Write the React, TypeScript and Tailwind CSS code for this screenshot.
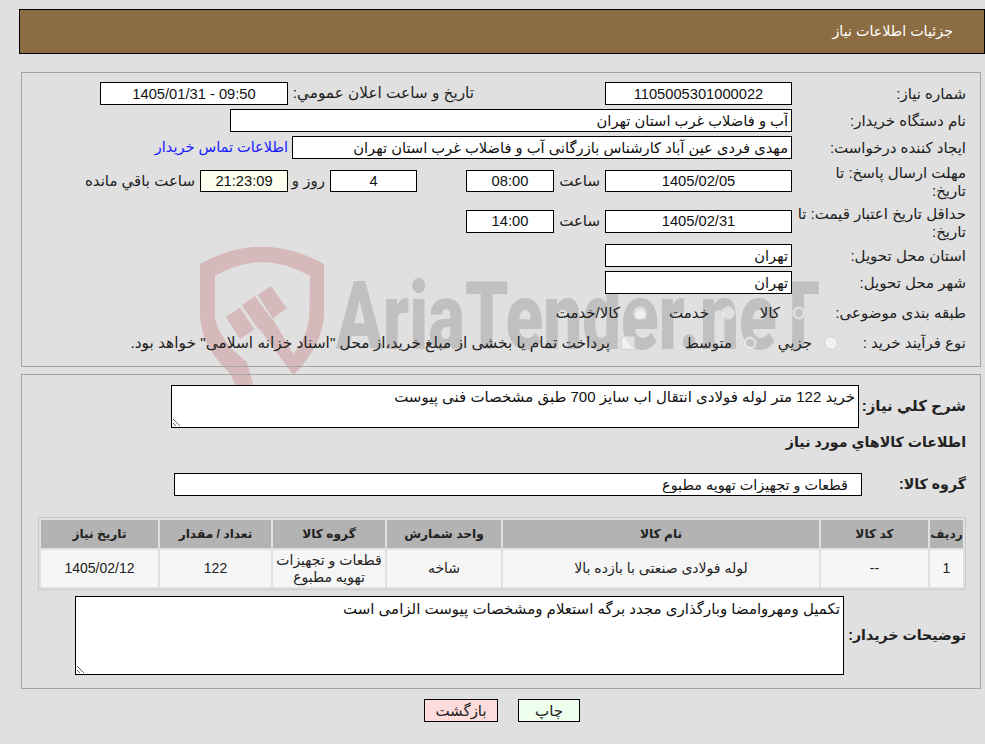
import React from 'react'

const font = "font-['Liberation_Sans','DejaVu_Sans',sans-serif]"

function Box({ value, w, center = false, bg = 'bg-white', ltr = false, h = 'h-[23px]' }: { value: string; w: string; center?: boolean; bg?: string; ltr?: boolean; h?: string }) {
  return (
    <input
      readOnly
      dir={ltr ? 'ltr' : 'rtl'}
      value={value}
      className={`${w} ${bg} ${h} shrink-0 border border-black px-[3px] text-[14.7px] text-[#111] outline-none ${center ? 'text-center' : 'text-right'} ${font}`}
    />
  )
}

function Row({ label, children, labelW = 'w-[174px]', h = 'h-[23px]', cls = '', labelCls = '' }: { label: string; children?: React.ReactNode; labelW?: string; h?: string; cls?: string; labelCls?: string }) {
  return (
    <div className={`flex items-center ${h} ${cls}`}>
      <div className={`${labelW} ${labelCls} shrink-0 text-[15px] leading-[18px] text-[#222]`}>{label}</div>
      {children}
    </div>
  )
}

function Radio({ checked = false, square = false }: { checked?: boolean; square?: boolean }) {
  return (
    <span className={`flex h-[14px] w-[14px] shrink-0 items-center justify-center border border-[#d2d2d2] bg-white/50 ${square ? 'rounded-[2px]' : 'rounded-full'}`}>
      {checked && <span className="h-[8px] w-[8px] rounded-full bg-[#c4c4c4]" />}
    </span>
  )
}

function Watermark() {
  return (
    <div className="pointer-events-none absolute left-[190px] top-[240px] h-[230px] w-[640px] overflow-hidden">
      <svg viewBox="0 0 450 450" className="absolute left-0 top-0 h-[150px] w-[150px] overflow-visible text-[#d6b9bb]" fill="currentColor">
        <path d="M30 72 Q215 -32 402 72 L402 230 Q392 325 310 405 L205 262 L245 232 L310 342 Q352 290 358 230 L360 108 Q215 25 75 108 L75 230 Q85 300 170 365 L200 470 L150 470 L120 400 Q35 320 30 230 Z" />
        <path d="M107 230 L150 203 L193 268 L150 297 Z" />
        <path d="M155 195 L195 168 L247 240 L205 268 Z" />
        <path d="M203 165 L243 138 L290 205 L248 235 Z" />
      </svg>
      <div className="absolute left-[146px] top-[22px] origin-left scale-x-[0.735] whitespace-nowrap font-['Roboto',sans-serif] text-[94px] font-black leading-[110px] text-[#c0c0c0]" dir="ltr">
        AriaTender.neT
      </div>
    </div>
  )
}

export default function App() {
  return (
    <div dir="rtl" className={`relative h-[744px] w-[985px] overflow-hidden bg-[#e0e0e0] pt-[9px] ${font}`}>
      <Watermark />

      <div className="relative">
        {/* Title bar */}
        <div className="ml-[19px] flex h-[45px] items-center border border-black bg-[#8c6d43] pr-[31px] text-[14.3px] text-white">
          جزئیات اطلاعات نیاز
        </div>

        {/* Need details */}
        <div className="ml-[21px] mr-[4px] mt-[18px] h-[295px] border border-[#a4a4a4] pr-[14px] pt-[9px]">
          <Row label="شماره نیاز:">
            <Box value="1105005301000022" w="w-[187px]" center />
            <div className="mr-[131px] w-[186px] shrink-0 text-[15.3px] text-[#222]">تاریخ و ساعت اعلان عمومي:</div>
            <Box value="1405/01/31 - 09:50" w="w-[188px]" center ltr />
          </Row>
          <Row label="نام دستگاه خریدار:" cls="mt-[4px]">
            <Box value="آب و فاضلاب غرب استان تهران" w="w-[562px]" />
          </Row>
          <Row label="ایجاد کننده درخواست:" cls="mt-[4px]">
            <Box value="مهدی فردی عین آباد کارشناس بازرگانی آب و فاضلاب غرب استان تهران" w="w-[500px]" />
            <a className="mr-[4px] text-[14.5px] text-[#1a1aff]">اطلاعات تماس خریدار</a>
          </Row>
          <Row label="مهلت ارسال پاسخ: تا تاریخ:" h="h-[36px]" cls="mt-[4px]" labelCls="pl-2 pt-[2px]">
            <Box value="1405/02/05" w="w-[187px]" center h="h-[22px]" />
            <div className="w-[51px] shrink-0 pr-[5px] text-[15px] text-[#222]">ساعت</div>
            <Box value="08:00" w="w-[88px]" center h="h-[22px]" />
            <div className="w-[49px] shrink-0" />
            <Box value="4" w="w-[87px]" center h="h-[22px]" />
            <div className="w-[42px] shrink-0 pr-[5px] text-[15px] text-[#222]">روز و</div>
            <Box value="21:23:09" w="w-[88px]" center bg="bg-[#fffff0]" h="h-[22px]" />
            <div className="pr-[5px] text-[15px] text-[#222]">ساعت باقي مانده</div>
          </Row>
          <Row label="حداقل تاریخ اعتبار قیمت: تا تاریخ:" h="h-[36px]" cls="mt-[4px]" labelCls="pt-[4px]">
            <Box value="1405/02/31" w="w-[187px]" center />
            <div className="w-[51px] shrink-0 pr-[5px] text-[15px] text-[#222]">ساعت</div>
            <Box value="14:00" w="w-[88px]" center />
          </Row>
          <Row label="استان محل تحویل:" cls="mt-[5px]">
            <Box value="تهران" w="w-[187px]" />
          </Row>
          <Row label="شهر محل تحویل:" cls="mt-[4px]">
            <Box value="تهران" w="w-[187px]" />
          </Row>
          <Row label="طبقه بندی موضوعی:" labelW="w-[160px]" h="h-[20px]" cls="mt-[9px]">
            <div className="flex w-[71px] shrink-0 items-center gap-[12px] text-[15px] text-[#222]"><Radio checked />کالا</div>
            <div className="flex w-[88px] shrink-0 items-center gap-[12px] text-[15px] text-[#222]"><Radio />خدمت</div>
            <div className="flex items-center gap-[13px] text-[15px] text-[#222]"><Radio />کالا/خدمت</div>
          </Row>
          <Row label="نوع فرآیند خرید :" labelW="w-[128px]" h="h-[20px]" cls="mt-[10px]">
            <div className="flex w-[81px] shrink-0 items-center gap-[12px] text-[15px] text-[#222]"><Radio />جزيي</div>
            <div className="flex w-[122px] shrink-0 items-center gap-[11px] text-[15px] text-[#222]"><Radio checked />متوسط</div>
            <div className="flex items-center gap-[11px] whitespace-nowrap text-[15.4px] text-[#222]"><Radio square />پرداخت تمام یا بخشی از مبلغ خرید،از محل "اسناد خزانه اسلامی" خواهد بود.</div>
          </Row>
        </div>

        {/* Goods */}
        <div className="ml-[21px] mr-[4px] mt-[7px] h-[315px] border border-[#a4a4a4] pr-[14px] pt-[10px]">
          <div className="flex h-[43px] items-center">
            <div className="w-[107px] shrink-0 text-[15px] font-bold text-[#222]">شرح کلي نياز:</div>
            <textarea
              readOnly
              dir="rtl"
              value="خرید 122 متر لوله فولادی انتقال اب سایز 700 طبق مشخصات فنی پیوست"
              className={`h-[43px] w-[688px] shrink-0 border border-black bg-white px-[3px] pt-[2px] text-[15px] leading-[18px] text-[#111] outline-none ${font}`}
            />
          </div>
          <div className="mt-[5px] flex h-[20px] items-center text-[14.2px] font-bold text-[#222]">اطلاعات کالاهاي مورد نياز</div>
          <div className="mt-[20px] flex h-[23px] items-center">
            <div className="w-[104px] shrink-0 text-[14.2px] font-bold text-[#222]">گروه کالا:</div>
            <input
              readOnly
              dir="rtl"
              value="قطعات و تجهیزات تهویه مطبوع"
              className={`h-[23px] w-[688px] shrink-0 border border-black bg-white pr-[13px] text-[14.4px] text-[#111] outline-none ${font}`}
            />
          </div>

          <table className="mt-[21px] w-[928px] table-fixed border-separate border-spacing-[2px] border border-[#c8c8c8] text-center text-[#222]">
            <colgroup>
              <col className="w-[33px]" />
              <col className="w-[107px]" />
              <col className="w-[316px]" />
              <col className="w-[114px]" />
              <col className="w-[112px]" />
              <col className="w-[111px]" />
              <col className="w-[117px]" />
            </colgroup>
            <thead>
              <tr className="h-[28px] bg-[#b3b3b3] text-[12.2px] font-bold">
                {['ردیف', 'کد کالا', 'نام کالا', 'واحد شمارش', 'گروه کالا', 'تعداد / مقدار', 'تاریخ نیاز'].map((t) => (
                  <th key={t} className="p-0 font-bold">{t}</th>
                ))}
              </tr>
            </thead>
            <tbody>
              <tr className="h-[37px] bg-[#f6f6f6] text-[14px] leading-[17px]">
                <td className="p-0">1</td>
                <td className="p-0">--</td>
                <td className="p-0">لوله فولادی صنعتی با بازده بالا</td>
                <td className="p-0">شاخه</td>
                <td className="p-0">قطعات و تجهیزات تهویه مطبوع</td>
                <td className="p-0">122</td>
                <td className="p-0">1405/02/12</td>
              </tr>
            </tbody>
          </table>

          <div className="mt-[6px] flex h-[79px] items-center">
            <div className="w-[122px] shrink-0 whitespace-nowrap text-[14.2px] font-bold text-[#222]">توضیحات خریدار:</div>
            <textarea
              readOnly
              dir="rtl"
              value="تکمیل ومهروامضا وبارگذاری مجدد برگه استعلام ومشخصات پیوست الزامی است"
              className={`h-[79px] w-[769px] shrink-0 border border-black bg-white px-[3px] pt-[3px] text-[15px] leading-[18px] text-[#111] outline-none ${font}`}
            />
          </div>
        </div>

        {/* Actions */}
        <div className="mt-[10px] flex justify-end pl-[424px]">
          <button className="h-[23px] w-[62px] border border-black bg-[#eeffee] text-[15px] text-[#222]">چاپ</button>
          <button className="mr-[20px] h-[23px] w-[74px] border border-black bg-[#ffdcdc] text-[15px] text-[#222]">بازگشت</button>
        </div>
      </div>
    </div>
  )
}
